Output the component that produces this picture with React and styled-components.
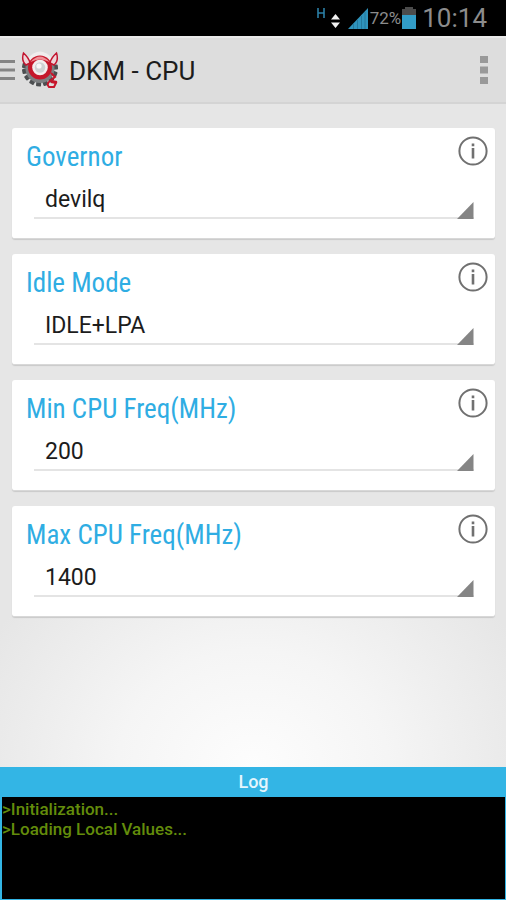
import React from "react";
import styled, { createGlobalStyle } from "styled-components";

const GlobalStyle = createGlobalStyle`
  *, *::before, *::after { box-sizing: border-box; }
  body { margin: 0; font-family: Roboto, "Liberation Sans", sans-serif; color: #1c1c1c; background: #e6e6e6; }
  button, select { font: inherit; color: inherit; }
`;

const Screen = styled.div`
  min-height: 100vh;
  display: flex;
  flex-direction: column;
`;

const StatusBar = styled.div`
  height: 36px;
  padding: 0 19px 0 0;
  display: flex;
  align-items: center;
  justify-content: flex-end;
  background: #000;
  color: #8c8c8c;
`;

const StatusIcons = styled.svg`
  display: block;
  flex: none;
`;

const Percent = styled.span`
  font-size: 17px;
  margin-left: 1px;
`;

const Clock = styled.time`
  font-size: 26px;
  line-height: 36px;
  margin-left: 5px;
`;

const ActionBar = styled.header`
  height: 68px;
  display: flex;
  align-items: center;
  background: #dddddd;
  border-top: 2px solid #e9e9e9;
  border-bottom: 2px solid #d4d4d4;
`;

const BarButton = styled.button`
  border: 0;
  padding: 0;
  background: none;
  display: flex;
  cursor: pointer;
`;

const MenuButton = styled(BarButton)`
  padding: 0 18px;
`;

const LogoSlot = styled.div`
  display: flex;
  margin-left: 6px;
`;

const Title = styled.h1`
  flex: 1;
  margin: 0;
  padding: 2px 0 0 10px;
  font-size: 26px;
  font-weight: 400;
  line-height: 32px;
`;

const Content = styled.main`
  flex: 1;
  padding: 24px 11px 24px 12px;
  display: flex;
  flex-direction: column;
  gap: 15px;
  background: radial-gradient(ellipse 300px 260px at 50% 100%, #fdfdfd 0%, #f5f5f5 45%, #e6e6e6 100%);
`;

const Card = styled.section`
  height: 111px;
  background: #fff;
  border-radius: 3px;
  border-bottom: 1px solid #d8d8d8;
  box-shadow: 0 1px 1px #c9c9c9;
`;

const CardHeader = styled.div`
  height: 53px;
  padding: 8px 7px 0 14px;
  display: flex;
  align-items: flex-start;
  justify-content: space-between;
`;

const CardTitle = styled.label`
  padding-top: 5px;
  font-family: "Roboto Condensed", Roboto, sans-serif;
  font-size: 27px;
  line-height: 32px;
  color: #2fade3;
`;

const Spinner = styled.div`
  position: relative;
  margin: 0 21px 0 22px;
`;

const Select = styled.select`
  appearance: none;
  display: block;
  width: 100%;
  height: 38px;
  padding: 0 24px 0 11px;
  border: 0;
  border-bottom: 2px solid #e4e4e4;
  border-radius: 0;
  background: transparent;
  font-size: 23px;
`;

const Corner = styled.svg`
  position: absolute;
  right: 0;
  bottom: 0;
  pointer-events: none;
`;

const LogPanel = styled.section`
  background: #33b5e5;
  padding: 0 1px 1px 2px;
`;

const LogTitle = styled.h2`
  margin: 0;
  font-size: 18px;
  font-weight: 500;
  line-height: 30px;
  text-align: center;
  color: #e4f6fd;
`;

const LogBody = styled.div`
  min-height: 102px;
  padding: 2px 0;
  background: #000;
  color: #638c0b;
  font-size: 17px;
  font-weight: 500;
  line-height: 20px;
`;

const LogLine = styled.div``;

function InfoIcon() {
  return (
    <svg width="30" height="30" viewBox="0 0 30 30" aria-hidden="true">
      <circle cx="15" cy="15" r="13.6" fill="none" stroke="#707070" strokeWidth="2" />
      <path d="M13.7 7.5h2.6v2.8h-2.6zM13.7 12h2.6v10.5h-2.6z" fill="#707070" />
    </svg>
  );
}

function Logo() {
  const teeth = [-5, 20, 45, 70, 95, 120, 145, 170, 190];
  return (
    <svg width="38" height="40" viewBox="0 0 38 40" aria-hidden="true">
      <g fill="#4c4f51">
        {teeth.map((a) => (
          <rect key={a} x="31" y="16" width="6" height="5" rx="1" transform={`rotate(${a} 19 18.5)`} />
        ))}
      </g>
      <circle cx="19" cy="18.5" r="14.5" fill="#7d8082" />
      <path d="M7 8Q19-5 31 8L26 18H12z" fill="#f0eded" />
      <path d="M2.5 3Q0 11 5 15L9 13Q8 8 2.5 3zM35.5 3Q38 11 33 15L29 13Q30 8 35.5 3z" fill="#eed4d8" stroke="#c21530" strokeWidth="1.5" />
      <circle cx="19" cy="17.5" r="12" fill="#c5182b" />
      <path d="M9.5 12Q19 1 28.5 12Q19 7 9.5 12z" fill="#ef8f96" />
      <circle cx="19" cy="17.5" r="7.8" fill="#f3eeee" />
      <circle cx="19" cy="17.5" r="5.2" fill="#ced2d3" />
      <circle cx="18" cy="16" r="2.6" fill="#f7f7f7" />
      <path d="M30 23L34 27L29 31Q25 34 28 37L33 37L35 33L30 32M31 31L36 32" fill="none" stroke="#c7152b" strokeWidth="2" />
    </svg>
  );
}

const settings = [
  { id: "governor", title: "Governor", value: "devilq" },
  { id: "idle", title: "Idle Mode", value: "IDLE+LPA" },
  { id: "min", title: "Min CPU Freq(MHz)", value: "200" },
  { id: "max", title: "Max CPU Freq(MHz)", value: "1400" },
];

const logLines = [">Initialization...", ">Loading Local Values..."];

function SettingCard({ id, title, value }) {
  return (
    <Card>
      <CardHeader>
        <CardTitle htmlFor={id}>{title}</CardTitle>
        <BarButton type="button" aria-label={`About ${title}`}>
          <InfoIcon />
        </BarButton>
      </CardHeader>
      <Spinner>
        <Select id={id} defaultValue={value}>
          <option>{value}</option>
        </Select>
        <Corner width="17" height="17" viewBox="0 0 17 17" aria-hidden="true">
          <path d="M16.5 0V17H0z" fill="#858585" />
        </Corner>
      </Spinner>
    </Card>
  );
}

export default function App() {
  return (
    <>
      <GlobalStyle />
      <Screen>
        <StatusBar>
          <StatusIcons width="53" height="24" viewBox="0 0 53 24" aria-hidden="true">
            <path d="M2 2v10M8 2v10M2 7h6" stroke="#2b7fa6" strokeWidth="1.6" fill="none" />
            <path d="M19.5 8L24 13.5H15zM19.5 22L24 16.5H15z" fill="#f2f2f2" />
            <path d="M32 23L52 2V23z" fill="#2f93bb" />
            <path d="M37.5 18v5M41.5 14v9M45.5 10v13M49 6v17" stroke="#24799c" strokeWidth="1" />
          </StatusIcons>
          <Percent>72%</Percent>
          <StatusIcons width="16" height="24" viewBox="0 0 16 24" aria-label="Battery">
            <path d="M4 1h8v2h3v7H1V3h3z" fill="#4b4b4b" />
            <path d="M1 9h14v14H1z" fill="#329cc6" />
          </StatusIcons>
          <Clock>10:14</Clock>
        </StatusBar>
        <ActionBar>
          <BarButton type="button" aria-label="Open menu">
            <svg width="15" height="24" viewBox="0 0 15 24" aria-hidden="true">
              <path d="M0 3.5h15M0 12h15M0 20.5h15" stroke="#858585" strokeWidth="3" />
            </svg>
          </BarButton>
          <LogoSlot>
            <Logo />
          </LogoSlot>
          <Title>DKM - CPU</Title>
          <MenuButton type="button" aria-label="More options">
            <svg width="8" height="30" viewBox="0 0 8 30" aria-hidden="true">
              <path d="M0 1h8v7H0zM0 11.5h8v7H0zM0 22h8v7H0z" fill="#999" />
            </svg>
          </MenuButton>
        </ActionBar>
        <Content>
          {settings.map((s) => (
            <SettingCard key={s.id} {...s} />
          ))}
        </Content>
        <LogPanel>
          <LogTitle>Log</LogTitle>
          <LogBody>
            {logLines.map((line) => (
              <LogLine key={line}>{line}</LogLine>
            ))}
          </LogBody>
        </LogPanel>
      </Screen>
    </>
  );
}
